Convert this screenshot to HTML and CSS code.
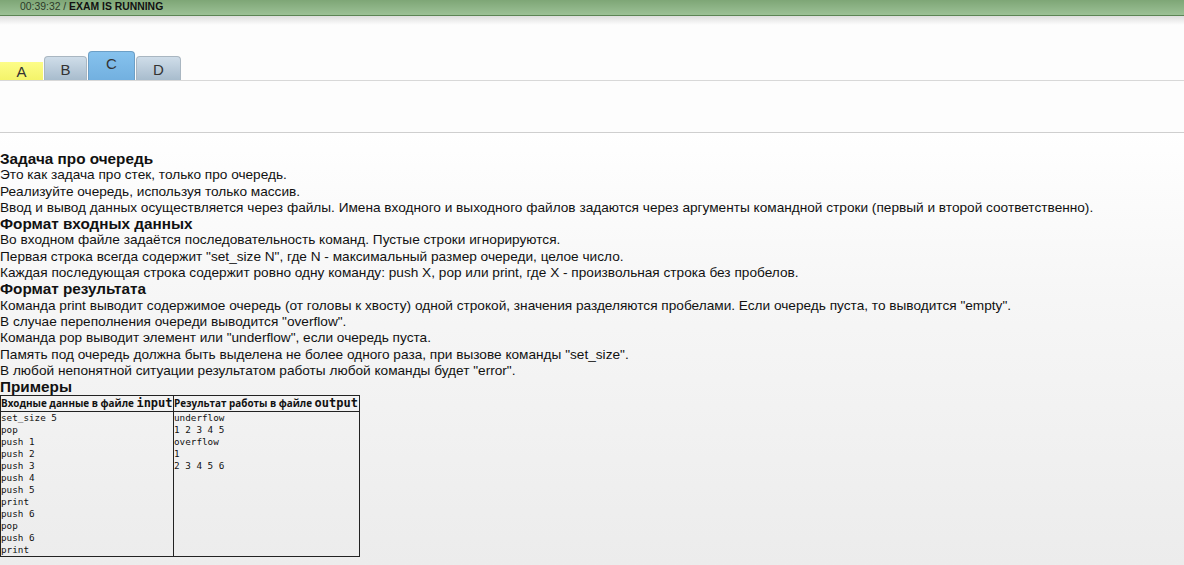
FILE: index.html
```html
<!DOCTYPE html>
<html>
<head>
<meta charset="utf-8">
<link rel="stylesheet" href="styles.css">
</head>
<body>
<div class="topbar"><span class="time">00:39:32 / </span><b>EXAM IS RUNNING</b></div>
<div class="shadow"></div>
<div class="tabs">
  <div class="tab tab-a">A</div>
  <div class="tab tab-b">B</div>
  <div class="tab tab-c">C</div>
  <div class="tab tab-d">D</div>
</div>
<div class="panel"></div>
<div class="content">
  <h2>Задача про очередь</h2>
  <div>Это как задача про стек, только про очередь.</div>
  <div>Реализуйте очередь, используя только массив.</div>
  <div>Ввод и вывод данных осуществляется через файлы. Имена входного и выходного файлов задаются через аргументы командной строки (первый и второй соответственно).</div>
  <h2>Формат входных данных</h2>
  <div>Во входном файле задаётся последовательность команд. Пустые строки игнорируются.</div>
  <div>Первая строка всегда содержит "set_size N", где N - максимальный размер очереди, целое число.</div>
  <div>Каждая последующая строка содержит ровно одну команду: push X, pop или print, где X - произвольная строка без пробелов.</div>
  <h2>Формат результата</h2>
  <div>Команда print выводит содержимое очередь (от головы к хвосту) одной строкой, значения разделяются пробелами. Если очередь пуста, то выводится "empty".</div>
  <div>В случае переполнения очереди выводится "overflow".</div>
  <div>Команда pop выводит элемент или "underflow", если очередь пуста.</div>
  <div>Память под очередь должна быть выделена не более одного раза, при вызове команды "set_size".</div>
  <div>В любой непонятной ситуации результатом работы любой команды будет "error".</div>
  <h2>Примеры</h2>
  <table class="examples">
    <tr>
      <th class="col1">Входные данные в файле <code>input</code></th>
      <th class="col2">Результат работы в файле <code>output</code></th>
    </tr>
    <tr>
      <td><pre>set_size 5
pop
push 1
push 2
push 3
push 4
push 5
print
push 6
pop
push 6
print</pre></td>
      <td><pre>underflow
1 2 3 4 5
overflow
1
2 3 4 5 6</pre></td>
    </tr>
  </table>
</div>
</body>
</html>
```
FILE: styles.css
```css
html, body {
  margin: 0;
  padding: 0;
}
body {
  font-family: "Liberation Sans", Arial, sans-serif;
  font-size: 13.65px;
  color: #111;
  background: linear-gradient(to bottom, #ffffff 130px, #f6f6f6 300px, #ececec 565px);
  min-height: 565px;
}
.topbar {
  height: 15px;
  background: linear-gradient(to bottom, #7ea676, #9cc196);
  border-bottom: 1px solid #5c8555;
  font-size: 10.4px;
  line-height: 13px;
  padding-left: 20px;
  color: #2b3a28;
}
.topbar b {
  color: #111;
}
.shadow {
  height: 9px;
  background: linear-gradient(to bottom, #dedede, #fdfdfd);
}
.tabs {
  display: flex;
  align-items: flex-end;
  height: 55px;
  border-bottom: 1px solid #d8d8d8;
  background: #fdfdfd;
}
.tab {
  font-size: 15px;
  color: #333;
  text-align: center;
  box-sizing: border-box;
}
.tab-a {
  width: 43px;
  height: 18px;
  padding-top: 2px;
  line-height: 15px;
  background: linear-gradient(to bottom, #fdfd88, #f4f46a);
}
.tab-b, .tab-d {
  height: 24px;
  line-height: 25px;
  background: linear-gradient(to bottom, #cfdde9, #a8bccd);
  border: 1px solid #a9b6c1;
  border-bottom: none;
  border-radius: 4px 4px 0 0;
  margin-left: 1px;
}
.tab-b { width: 43px; }
.tab-d { width: 45px; }
.tab-c {
  width: 47px;
  height: 29px;
  line-height: 23px;
  margin-left: 1px;
  background: linear-gradient(to bottom, #86c2ee, #72b0e0);
  border: 1px solid #6c9fc6;
  border-bottom: none;
  border-radius: 4px 4px 0 0;
}
.panel {
  height: 51px;
  background: #fdfdfd;
  border-bottom: 1px solid #cfcfcf;
}
.content {
  padding-top: 18px;
  line-height: 16.3px;
}
h2 {
  font-size: 15.3px;
  font-weight: bold;
  margin: 0;
  line-height: 16.3px;
}
.examples {
  border-collapse: collapse;
  border: 1px solid #222;
  margin-top: 0;
}
.examples th {
  font-family: "Open Sans", "DejaVu Sans", sans-serif;
  font-size: 9.9px;
  font-weight: bold;
  text-align: left;
  padding: 0;
  border: 1px solid #222;
  line-height: 15px;
  height: 15px;
  white-space: nowrap;
}
.examples th code {
  font-family: "DejaVu Sans Mono", monospace;
  font-size: 12px;
  font-weight: bold;
}
.examples td {
  vertical-align: top;
  padding: 0;
  border: 1px solid #222;
}
.examples pre {
  margin: 0;
  font-family: "DejaVu Sans Mono", monospace;
  font-size: 9.3px;
  line-height: 12px;
  padding-top: 0;
}
.col1 { width: 172px; }
.col2 { width: 185px; }
```
